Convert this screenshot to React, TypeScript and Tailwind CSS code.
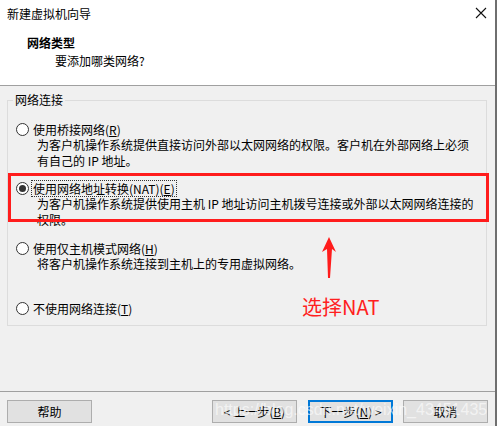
import React from "react";

const ui = "font-['Microsoft_YaHei','Noto_Sans_CJK_SC',sans-serif]";

function Radio({ checked }: { checked?: boolean }) {
  return (
    <span className="w-[13px] h-[13px] rounded-full border border-[#333] bg-white flex items-center justify-center shrink-0">
      {checked && <span className="w-[7px] h-[7px] rounded-full bg-[#333]" />}
    </span>
  );
}

function Option({
  label,
  hotkey,
  lines,
  checked,
  focus,
  h,
}: {
  label: string;
  hotkey: string;
  lines: string[];
  checked?: boolean;
  focus?: boolean;
  h: string;
}) {
  return (
    <div className={`flex flex-col ${h}`}>
      <div className="flex items-center gap-[3px] h-[16px] pl-[8px]">
        <Radio checked={checked} />
        <span className={`leading-[15px] px-[1px] ${focus ? "outline outline-1 outline-dotted outline-[#333]" : ""}`}>
          {label}(<span className="underline">{hotkey}</span>)
        </span>
      </div>
      {lines.map((l, i) => (
        <div key={i} className="pl-[29px] leading-[16px] whitespace-pre">
          {l}
        </div>
      ))}
    </div>
  );
}

function Btn({ children, primary, className = "" }: { children: React.ReactNode; primary?: boolean; className?: string }) {
  return (
    <div
      className={`w-[85px] h-[23px] bg-[#e1e1e1] flex items-center justify-center text-[12px] ${
        primary ? "border-2 border-[#0078d7]" : "border border-[#adadad]"
      } ${className}`}
    >
      {children}
    </div>
  );
}

export default function App() {
  return (
    <div className={`w-[497px] h-[426px] flex text-[12px] text-black relative overflow-hidden ${ui}`}>
      <div className="flex-1 flex flex-col">
        {/* header */}
        <div className="bg-white h-[85px] flex flex-col">
          <div className="h-[28px] flex items-center justify-between pl-[7px] pr-[8px]">
            <span className="text-[12px]">新建虚拟机向导</span>
            <svg width="12" height="12" viewBox="0 0 12 12" className="mt-[-2px]">
              <path d="M1 1 L11 11 M11 1 L1 11" stroke="#111" strokeWidth="1.1" />
            </svg>
          </div>
          <div className="pl-[27px] mt-[6px] font-bold leading-[18px]">网络类型</div>
          <div className="pl-[55px] leading-[18px]">要添加哪类网络?</div>
        </div>
        <div className="h-[1px] bg-[#a0a0a0]" />
        {/* body */}
        <div className="flex-1 bg-[#f0f0f0] flex flex-col">
          <div className="mt-[14px] mx-[7px] mr-[8px] h-[226px] border border-[#dcdcdc] relative">
            <span className="absolute left-[5px] top-[-10px] bg-[#f0f0f0] px-[2px] leading-[18px]">网络连接</span>
            <div className="flex flex-col pt-[20px]">
              <Option
                h="h-[59px]"
                label="使用桥接网络"
                hotkey="R"
                lines={[
                  "为客户机操作系统提供直接访问外部以太网网络的权限。客户机在外部网络上必须",
                  "有自己的 IP 地址。",
                ]}
              />
              <Option
                h="h-[60px]"
                checked
                focus
                label="使用网络地址转换(NAT)"
                hotkey="E"
                lines={[
                  "为客户机操作系统提供使用主机 IP 地址访问主机拨号连接或外部以太网网络连接的",
                  "权限。",
                ]}
              />
              <Option h="h-[60px]" label="使用仅主机模式网络" hotkey="H" lines={["将客户机操作系统连接到主机上的专用虚拟网络。"]} />
              <Option h="h-[16px]" label="不使用网络连接" hotkey="T" lines={[]} />
            </div>
          </div>
          <div className="mt-[65px] h-[1px] bg-[#a0a0a0]" />
          <div className="flex items-center pl-[7px] pt-[8px]">
            <Btn>帮助</Btn>
            <Btn className="ml-[120px]">&lt; 上一步(<span className="underline">B</span>)</Btn>
            <Btn primary className="ml-[11px]">
              下一步(<span className="underline">N</span>) &gt;
            </Btn>
            <Btn className="ml-[10px]">取消</Btn>
          </div>
        </div>
      </div>
      <div className="w-[2px] bg-[#6f6f6f]" />

      {/* annotations */}
      <div className="absolute left-[8px] top-[173px] w-[481px] h-[49px] border-[3px] border-[#ff1c1c] pointer-events-none" />
      <svg className="absolute left-[318px] top-[236px]" width="22" height="44" viewBox="0 0 22 44">
        <polygon points="11,1 4,16 9,13 10,42 12,42 14,13 18,16" fill="#ff1c1c" />
      </svg>
      <div className="absolute left-[302px] top-[294px] text-[20px] leading-[26px] text-[#ff2020] font-['Noto_Sans_CJK_SC',sans-serif]">
        选择NAT
      </div>
      <div className="absolute left-[215px] top-[400px] text-[16px] leading-[20px] text-white/60 font-['Liberation_Sans',sans-serif] pointer-events-none">
        https://blog.csdn.net/weixin_43451435
      </div>
    </div>
  );
}
